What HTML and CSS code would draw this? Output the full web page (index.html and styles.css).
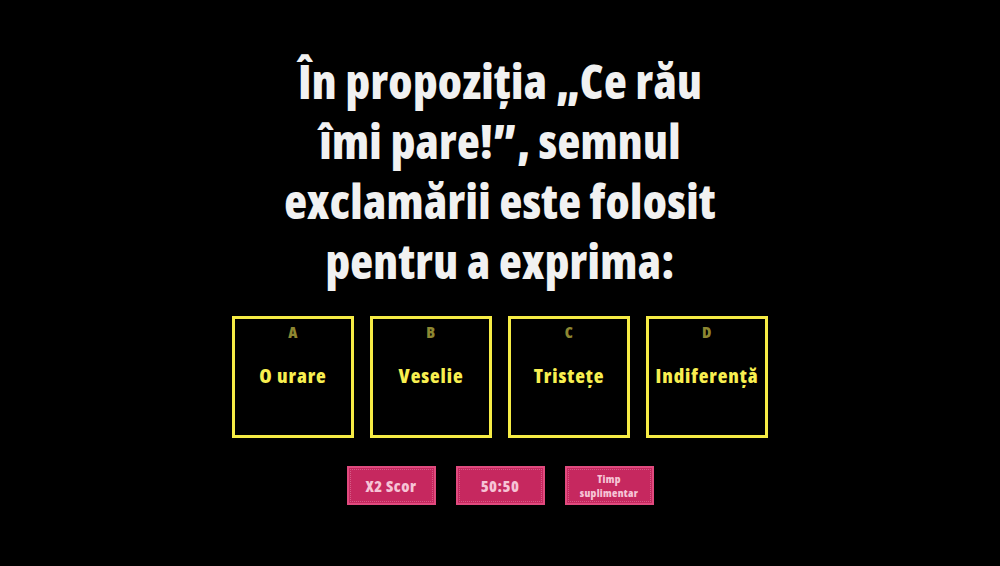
FILE: index.html
```html
<!DOCTYPE html>
<html lang="ro">
<head>
<meta charset="utf-8">
<link rel="stylesheet" href="styles.css">
</head>
<body>
<main class="quiz">
  <h1 class="question">În propoziția „Ce rău<br>îmi pare!”, semnul<br>exclamării este folosit<br>pentru a exprima:</h1>
  <div class="answers">
    <div class="answer"><span class="letter">A</span><span class="text">O urare</span></div>
    <div class="answer"><span class="letter">B</span><span class="text">Veselie</span></div>
    <div class="answer"><span class="letter">C</span><span class="text">Tristețe</span></div>
    <div class="answer"><span class="letter">D</span><span class="text">Indiferență</span></div>
  </div>
  <div class="helpers">
    <button class="helper">X2 Scor</button>
    <button class="helper">50:50</button>
    <button class="helper small">Timp suplimentar</button>
  </div>
</main>
</body>
</html>
```
FILE: styles.css
```css
html, body {
  margin: 0;
  padding: 0;
  background: #000;
  height: 100%;
}
body {
  font-family: "Open Sans", "DejaVu Sans Condensed", sans-serif;
  color: #f2f2f2;
}
.quiz {
  display: flex;
  flex-direction: column;
  align-items: center;
  padding-top: 51px;
}
.question {
  margin: 0;
  white-space: nowrap;
  text-align: center;
  font-size: 47px;
  font-stretch: 75%;
  letter-spacing: 0.3px;
  line-height: 60px;
  font-weight: 800;
  color: #f1f1f1;
}
.answers {
  display: flex;
  gap: 16px;
  margin-top: 25px;
}
.answer {
  box-sizing: border-box;
  width: 122px;
  height: 122px;
  border: 3px solid #f6ec45;
  display: flex;
  flex-direction: column;
  align-items: center;
  padding-top: 2px;
}
.letter {
  font-size: 16px;
  font-weight: 800;
  font-stretch: 75%;
  letter-spacing: 0.5px;
  color: #8d8731;
  line-height: 22px;
}
.text {
  margin-top: 21px;
  font-size: 20px;
  font-weight: 800;
  font-stretch: 75%;
  letter-spacing: 0.9px;
  color: #f8ef50;
  line-height: 24px;
}
.helpers {
  display: flex;
  gap: 20px;
  margin-top: 28px;
}
.helper {
  box-sizing: border-box;
  width: 89px;
  height: 39px;
  background: #c6285f;
  border: 2px solid #e04a7e;
  outline: 1px dotted #d65b86;
  outline-offset: -4px;
  color: #f6c4d6;
  font-family: inherit;
  font-weight: 800;
  font-size: 16px;
  font-stretch: 75%;
  letter-spacing: 0.5px;
  padding: 0;
  line-height: 1;
}
.helper.small {
  font-size: 11px;
  letter-spacing: 0.3px;
  line-height: 14px;
  padding: 0 8px;
}
```
